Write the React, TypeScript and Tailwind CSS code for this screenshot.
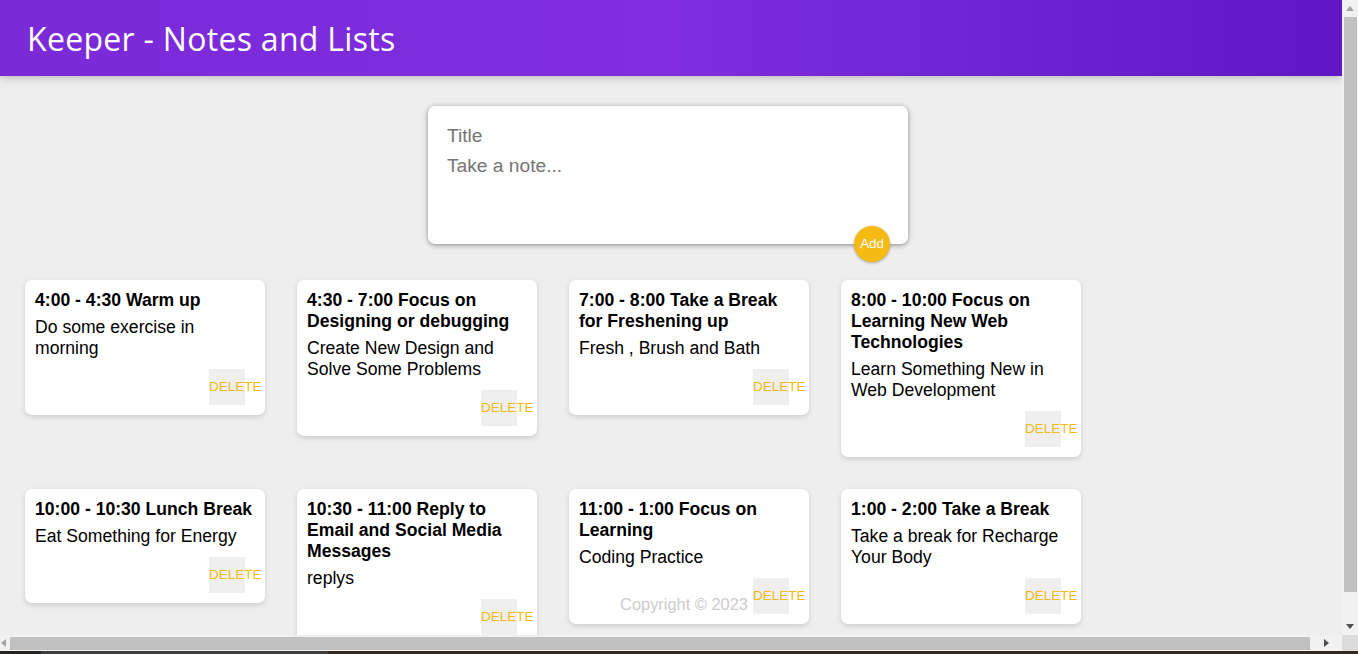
import React from "react";

const notes = [
  { t: "4:00 - 4:30 Warm up", c: "Do some exercise in morning" },
  { t: "4:30 - 7:00 Focus on Designing or debugging", c: "Create New Design and Solve Some Problems" },
  { t: "7:00 - 8:00 Take a Break for Freshening up", c: "Fresh , Brush and Bath" },
  { t: "8:00 - 10:00 Focus on Learning New Web Technologies", c: "Learn Something New in Web Development" },
  { t: "10:00 - 10:30 Lunch Break", c: "Eat Something for Energy" },
  { t: "10:30 - 11:00 Reply to Email and Social Media Messages", c: "replys" },
  { t: "11:00 - 1:00 Focus on Learning", c: "Coding Practice" },
  { t: "1:00 - 2:00 Take a Break", c: "Take a break for Recharge Your Body" },
];

function Note({ t, c }: { t: string; c: string }) {
  return (
    <div className="m-[16px] w-[240px] rounded-[7px] bg-white p-[10px] shadow-[0_2px_5px_#ccc] flex flex-col">
      <h1 className="text-[17.6px] leading-[21px] font-bold text-black mb-[6px]">{t}</h1>
      <p className="text-[17.6px] leading-[21px] text-black mb-[10px]">{c}</p>
      <div className="flex justify-end">
        <div className="mr-[10px] w-[36px] h-[36px] bg-[#efefef] overflow-visible whitespace-nowrap text-[13.5px] leading-[36px] text-[#f5ba13]">
          DELETE
        </div>
      </div>
    </div>
  );
}

export default function App() {
  return (
    <div
      className="w-[1358px] h-[654px] flex flex-col overflow-hidden bg-[#eee]"
      style={{ fontFamily: '"Liberation Sans", Arial, sans-serif' }}
    >
      <div className="flex h-[635px]">
        <div className="relative w-[1342px] h-full overflow-hidden bg-[#eee]">
          <header className="h-[76px] flex items-center pl-[27px] bg-linear-to-r from-[#7b2ad8] via-[#7f2ddf] to-[#5e17c3] shadow-[0_0_10px_0_rgba(0,0,0,0.3)] relative z-10">
            <h1
              className="text-white text-[32px] leading-none tracking-[0.3px] mt-[1px]"
              style={{ fontFamily: '"Comic Sans MS", "Open Sans", sans-serif' }}
            >
              Keeper - Notes and Lists
            </h1>
          </header>

          <form className="relative mx-auto mt-[30px] mb-[20px] w-[480px] h-[138px] translate-x-[-3px] rounded-[7px] bg-white p-[15px] shadow-[0_1px_5px_rgb(138,137,137)] flex flex-col">
            <input
              placeholder="Title"
              className="w-full p-[4px] text-[19.2px] leading-[22px] outline-none placeholder:text-[#757575]"
            />
            <textarea
              placeholder="Take a note..."
              className="w-full flex-1 p-[4px] text-[19.2px] leading-[22px] outline-none resize-none placeholder:text-[#757575]"
            />
            <button
              type="button"
              className="absolute right-[18px] bottom-[-18px] w-[36px] h-[36px] rounded-full bg-[#f5ba13] text-white text-[13.33px] shadow-[0_1px_3px_rgba(0,0,0,0.3)]"
            >
              Add
            </button>
          </form>

          <div className="flex flex-wrap items-start pl-[9px] w-[1342px]">
            {notes.map((n, i) => (
              <Note key={i} t={n.t} c={n.c} />
            ))}
          </div>

          <footer className="absolute bottom-0 left-[13px] w-[1342px] h-[40px] text-center">
            <p className="text-[#ccc] text-[16.4px] leading-[18px]">Copyright © 2023</p>
          </footer>
        </div>

        <div className="w-[16px] h-full bg-[#f1f1f1] flex flex-col">
          <div className="h-[17px] flex items-center justify-center">
            <svg width="8" height="5" viewBox="0 0 8 5"><path d="M4 0 L8 5 L0 5 Z" fill="#a3a3a3" /></svg>
          </div>
          <div className="ml-[2px] w-[13px] h-[575px] bg-[#c1c1c1]" />
          <div className="flex-1" />
          <div className="h-[17px] flex items-center justify-center">
            <svg width="8" height="5" viewBox="0 0 8 5"><path d="M0 0 L8 0 L4 5 Z" fill="#505050" /></svg>
          </div>
        </div>
      </div>

      <div className="flex h-[16px]">
        <div className="w-[1342px] h-full bg-[#f1f1f1] flex items-center">
          <div className="w-[10px] h-full flex items-center justify-start pl-[1px]">
            <svg width="5" height="8" viewBox="0 0 5 8"><path d="M5 0 L5 8 L0 4 Z" fill="#a3a3a3" /></svg>
          </div>
          <div className="w-[1300px] h-[13px] bg-[#c1c1c1]" />
          <div className="flex-1 h-full flex items-center justify-center">
            <svg width="5" height="8" viewBox="0 0 5 8"><path d="M0 0 L5 4 L0 8 Z" fill="#505050" /></svg>
          </div>
        </div>
        <div className="w-[16px] h-full bg-[#dcdcdc]" />
      </div>

      <div className="h-[3px] bg-[#2f2a27] flex">
        <div className="w-[41px] h-full bg-[#2a2420]" />
        <div className="w-[287px] h-full bg-[#3d3d3d]" />
        <div className="flex-1 h-full bg-[#35291f]" />
      </div>
    </div>
  );
}
